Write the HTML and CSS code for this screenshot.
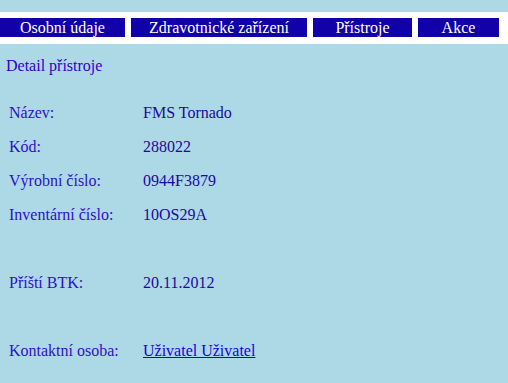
FILE: index.html
```html
<!DOCTYPE html>
<html lang="cs">
<head>
<meta charset="utf-8">
<title>Detail přístroje</title>
<link rel="stylesheet" href="styles.css">
</head>
<body>
<nav class="menu">
  <a class="menu-item item-osobni" href="#">Osobní údaje</a>
  <a class="menu-item item-zarizeni" href="#">Zdravotnické zařízení</a>
  <a class="menu-item item-pristroje" href="#">Přístroje</a>
  <a class="menu-item item-akce" href="#">Akce</a>
</nav>
<h1 class="title">Detail přístroje</h1>
<div class="detail">
  <div class="label">Název:</div><div class="value">FMS Tornado</div>
  <div class="label">Kód:</div><div class="value">288022</div>
  <div class="label">Výrobní číslo:</div><div class="value">0944F3879</div>
  <div class="label">Inventární číslo:</div><div class="value">10OS29A</div>
  <div class="spacer"></div>
  <div class="label">Příští BTK:</div><div class="value">20.11.2012</div>
  <div class="spacer"></div>
  <div class="label">Kontaktní osoba:</div><div class="value"><a class="link" href="#">Uživatel Uživatel</a></div>
</div>
</body>
</html>
```
FILE: styles.css
```css
html, body {
  margin: 0;
  padding: 0;
  background: #add8e6;
  font-family: "Liberation Serif", "Times New Roman", serif;
  font-size: 16px;
  line-height: 18px;
}
.menu {
  margin-top: 12px;
  background: #ffffff;
  display: flex;
  gap: 6px;
  padding: 6px 0 7px 0;
}
.menu-item {
  display: block;
  height: 19px;
  line-height: 19px;
  background: #1100aa;
  color: #ffffff;
  text-decoration: none;
  text-align: center;
  font-size: 16px;
  white-space: nowrap;
}
.item-osobni { width: 125px; }
.item-zarizeni { width: 176px; }
.item-pristroje { width: 99px; }
.item-akce { width: 81px; }
.title {
  margin: 13px 0 0 6px;
  font-size: 16px;
  font-weight: normal;
  line-height: 18px;
  color: #3300cc;
}
.detail {
  display: grid;
  grid-template-columns: 134px 1fr;
  grid-auto-rows: 34px;
  align-items: center;
  padding-left: 9px;
  margin-top: 21px;
}
.label {
  color: #2f10c8;
}
.value {
  color: #20089e;
}
.spacer {
  grid-column: 1 / 3;
}
.link {
  color: #1a00dd;
  text-decoration: underline;
}
```
